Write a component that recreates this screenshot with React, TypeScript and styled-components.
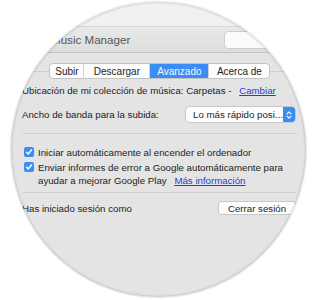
import React from "react";
import styled, { createGlobalStyle } from "styled-components";

const Global = createGlobalStyle`
  html, body { margin: 0; padding: 0; background: #ffffff; }
  body { font-family: "Liberation Sans", Arial, sans-serif; color: #1c1c1c; }
`;

const Page = styled.div`
  width: 318px;
  height: 300px;
  padding: 2px 0 0 11px;
  box-sizing: border-box;
`;

const Lens = styled.div`
  width: 295px;
  height: 295px;
  border-radius: 50%;
  overflow: hidden;
  background: #e4e4e4;
  position: relative;
  box-shadow: 0 0 1px 1px rgba(0, 0, 0, 0.08), 0 0 3px rgba(0, 0, 0, 0.08);
  display: flex;
  flex-direction: column;
  &::after {
    content: "";
    position: absolute;
    inset: 0;
    border-radius: 50%;
    box-shadow: inset 0 0 2px 1px rgba(0, 0, 0, 0.12);
    pointer-events: none;
  }
`;

const Desktop = styled.div`
  height: 24px;
  background: #f1f1f1;
  flex: none;
`;

const TitleBar = styled.div`
  height: 27px;
  box-sizing: border-box;
  background: linear-gradient(#e9e9e9, #dddddd);
  border-top: 1px solid #d9d9d9;
  border-bottom: 1px solid #c4c4c4;
  display: flex;
  align-items: center;
  padding-left: 40px;
  flex: none;
`;

const Title = styled.div`
  font-size: 11.6px;
  color: #555;
  flex: 1;
`;

const SearchField = styled.div`
  width: 80px;
  height: 16px;
  background: #fbfbfb;
  border: 1px solid #cdcdcd;
  border-radius: 4px;
  flex: none;
`;

const Body = styled.div`
  display: flex;
  flex-direction: column;
  padding-top: 10px;
`;

const TabRow = styled.div`
  display: flex;
  align-items: center;
`;

const TabLine = styled.div<{ $grow: number }>`
  flex: ${(p) => p.$grow};
  height: 0;
  border-top: 1px solid #cfcfcf;
`;

const Segmented = styled.div`
  display: flex;
  height: 14px;
  border: 1px solid #c3c3c3;
  border-radius: 4px;
  background: #fdfdfd;
  overflow: hidden;
  flex: none;
`;

const Segment = styled.div<{ $w: number; $active?: boolean }>`
  width: ${(p) => p.$w}px;
  display: flex;
  align-items: center;
  justify-content: center;
  font-size: 10px;
  color: ${(p) => (p.$active ? "#f4f8ff" : "#1c1c1c")};
  background: ${(p) => (p.$active ? "#3b8df5" : "transparent")};
  border-left: 1px solid #d2d2d2;
  &:first-child { border-left: none; }
`;

const Content = styled.div`
  display: flex;
  flex-direction: column;
  padding: 0 10px 0 11px;
  font-size: 9.7px;
`;

const Row = styled.div<{ $mt: number }>`
  display: flex;
  align-items: center;
  justify-content: space-between;
  margin-top: ${(p) => p.$mt}px;
  white-space: nowrap;
`;

const Link = styled.span`
  color: #1f3fd6;
  text-decoration: underline;
  margin-left: 5px;
`;

const Popup = styled.div`
  width: 111px;
  height: 17px;
  box-sizing: border-box;
  display: flex;
  background: #fdfdfd;
  border: 1px solid #c8c8c8;
  border-radius: 4px;
  overflow: hidden;
  font-size: 9.7px;
`;

const PopupLabel = styled.div`
  flex: 1;
  display: flex;
  align-items: center;
  padding-left: 7px;
`;

const PopupArrow = styled.div`
  width: 12px;
  background: #3b8df5;
  display: flex;
  align-items: center;
  justify-content: center;
`;

const Separator = styled.div<{ $mt: number }>`
  margin-top: ${(p) => p.$mt}px;
  border-top: 1px solid #d0d0d0;
`;

const CheckRow = styled.div<{ $mt: number }>`
  display: flex;
  align-items: flex-start;
  margin-top: ${(p) => p.$mt}px;
  line-height: 13px;
`;

const Check = styled.div`
  width: 10px;
  height: 10px;
  border-radius: 2px;
  background: #3b8df5;
  display: flex;
  align-items: center;
  justify-content: center;
  margin: 1px 4px 0 2px;
  flex: none;
`;

const Button = styled.div`
  width: 78px;
  height: 14px;
  box-sizing: border-box;
  background: #fdfdfd;
  border: 1px solid #c8c8c8;
  border-radius: 3px;
  display: flex;
  align-items: center;
  justify-content: center;
  font-size: 9.7px;
`;

const CheckIcon = () => (
  <svg width="8" height="8" viewBox="0 0 8 8">
    <path d="M1.5 4.2 L3.3 6 L6.6 1.8" fill="none" stroke="#fff" strokeWidth="1.4" strokeLinecap="round" strokeLinejoin="round" />
  </svg>
);

const Arrows = () => (
  <svg width="6" height="10" viewBox="0 0 6 10">
    <path d="M1 3.8 L3 1.8 L5 3.8 M1 6.2 L3 8.2 L5 6.2" fill="none" stroke="#fff" strokeWidth="1.1" strokeLinecap="round" strokeLinejoin="round" />
  </svg>
);

export default function App() {
  return (
    <Page>
      <Global />
      <Lens>
        <Desktop />
        <TitleBar>
          <Title>Music Manager</Title>
          <SearchField />
        </TitleBar>
        <Body>
          <TabRow>
            <TabLine $grow={41} />
            <Segmented>
              <Segment $w={33}>Subir</Segment>
              <Segment $w={65}>Descargar</Segment>
              <Segment $w={58} $active>Avanzado</Segment>
              <Segment $w={60}>Acerca de</Segment>
            </Segmented>
            <TabLine $grow={38} />
          </TabRow>
          <Content>
            <Row $mt={6}>
              <span>
                Ubicación de mi colección de música: Carpetas - <Link>Cambiar</Link>
              </span>
            </Row>
            <Row $mt={10}>
              <span>Ancho de banda para la subida:</span>
              <Popup>
                <PopupLabel>Lo más rápido posi...</PopupLabel>
                <PopupArrow>
                  <Arrows />
                </PopupArrow>
              </Popup>
            </Row>
            <Separator $mt={10} />
            <CheckRow $mt={12}>
              <Check><CheckIcon /></Check>
              <span>Iniciar automáticamente al encender el ordenador</span>
            </CheckRow>
            <CheckRow $mt={2}>
              <Check><CheckIcon /></Check>
              <span>
                Enviar informes de error a Google automáticamente para
                <br />
                ayudar a mejorar Google Play <Link>Más información</Link>
              </span>
            </CheckRow>
            <Separator $mt={5} />
            <Row $mt={8}>
              <span>Has iniciado sesión como</span>
              <Button>Cerrar sesión</Button>
            </Row>
          </Content>
        </Body>
      </Lens>
    </Page>
  );
}
